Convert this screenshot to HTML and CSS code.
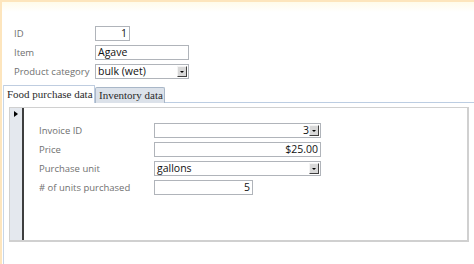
FILE: index.html
```html
<!DOCTYPE html>
<html>
<head>
<meta charset="utf-8">
<link rel="stylesheet" href="styles.css">
</head>
<body>
<div class="window">
  <div class="header">
    <div class="row">
      <span class="label">ID</span>
      <span class="box num w-id">1</span>
    </div>
    <div class="row">
      <span class="label">Item</span>
      <span class="box w-item">Agave</span>
    </div>
    <div class="row">
      <span class="label">Product category</span>
      <span class="box combo w-item"><span class="val">bulk (wet)</span><span class="drop"><span class="arrow"></span></span></span>
    </div>
  </div>
  <div class="tabsection">
    <div class="tabs">
      <div class="tab active">Food purchase data</div>
      <div class="tab">Inventory data</div>
      <div class="tabline"></div>
    </div>
    <div class="pane">
      <div class="panel">
        <div class="selector"><span class="tri"></span></div>
        <div class="form">
          <div class="frow">
            <span class="flabel">Invoice ID</span>
            <span class="box combo w-wide"><span class="val num">3</span><span class="drop"><span class="arrow"></span></span></span>
          </div>
          <div class="frow">
            <span class="flabel">Price</span>
            <span class="box num w-wide">$25.00</span>
          </div>
          <div class="frow">
            <span class="flabel">Purchase unit</span>
            <span class="box combo w-wide"><span class="val">gallons</span><span class="drop"><span class="arrow"></span></span></span>
          </div>
          <div class="frow">
            <span class="flabel"># of units purchased</span>
            <span class="box num w-units">5</span>
          </div>
        </div>
      </div>
    </div>
  </div>
</div>
</body>
</html>
```
FILE: styles.css
```css
html, body {
  margin: 0;
  padding: 0;
  background: #ffffff;
}
body {
  width: 474px;
  height: 264px;
  overflow: hidden;
  font-family: "Open Sans", "Noto Sans", sans-serif;
}
.window {
  height: 262px;
  border-top: 2px solid #fde5bd;
  border-left: 2px solid #fde5bd;
  background: linear-gradient(#fffbea 0, #ffffff 10px);
  display: flex;
  flex-direction: column;
}
.header {
  padding: 24px 0 0 12px;
  display: flex;
  flex-direction: column;
  gap: 4px;
}
.row {
  display: flex;
  align-items: center;
  height: 15px;
}
.label {
  width: 81px;
  font-size: 9.5px;
  color: #707070;
  line-height: 15px;
}
.box {
  box-sizing: border-box;
  height: 15px;
  border: 1px solid #b0b4ba;
  background: #fff;
  font-size: 10.5px;
  line-height: 13px;
  color: #111;
  padding: 0 2px;
  white-space: nowrap;
  overflow: hidden;
}
.num { text-align: right; }
.w-id { width: 35px; }
.w-item { width: 94px; }
.w-wide { width: 167px; }
.w-units { width: 99px; }
.combo {
  display: flex;
  padding-right: 1px;
}
.combo .val {
  flex: 1;
}
.drop {
  width: 10px;
  height: 11px;
  margin-top: 1px;
  box-sizing: border-box;
  border-top: 1px solid #f4f4f4;
  border-left: 1px solid #f4f4f4;
  border-right: 1px solid #404040;
  border-bottom: 1px solid #404040;
  background: #d8d8d8;
  display: flex;
  align-items: center;
  justify-content: center;
}
.arrow {
  width: 0;
  height: 0;
  border-left: 2px solid transparent;
  border-right: 2px solid transparent;
  border-top: 2px solid #000;
}
.tabsection {
  flex: 1;
  margin-top: 6px;
  margin-left: 1px;
  border-left: 1px solid #c7d6e8;
  display: flex;
  flex-direction: column;
}
.tabs {
  display: flex;
  align-items: flex-end;
  height: 18px;
}
.tab {
  box-sizing: border-box;
  font-family: "Liberation Serif", "DejaVu Serif", serif;
  font-size: 11px;
  color: #2a2a2a;
  white-space: nowrap;
  overflow: hidden;
}
.tab.active {
  height: 18px;
  line-height: 17px;
  padding: 0 2px 0 3px;
  background: #fff;
  border-top: 1px solid #bfcde0;
  border-right: 1px solid #bfcde0;
  width: 91px;
}
.tab:not(.active) {
  height: 16px;
  line-height: 15px;
  width: 70px;
  padding: 0 3px;
  background: #dce2ea;
  border: 1px solid #a9b7c8;
  border-bottom: none;
  border-radius: 2px 2px 0 0;
}
.tabline {
  flex: 1;
  height: 1px;
  background: #bccde2;
}
.pane {
  flex: 1;
  padding: 4px 5px 0 5px;
}
.panel {
  height: 135px;
  box-sizing: border-box;
  border: 1px solid #d0d0d0;
  border-right-width: 2px;
  border-bottom-width: 2px;
  display: flex;
}
.selector {
  width: 12px;
  background: #e4e8ee;
  border-right: 2px solid #3e3e3e;
  position: relative;
}
.tri {
  position: absolute;
  left: 4px;
  top: 3px;
  width: 0;
  height: 0;
  border-top: 3px solid transparent;
  border-bottom: 3px solid transparent;
  border-left: 4px solid #000;
}
.form {
  flex: 1;
  padding: 15px 0 0 15px;
  display: flex;
  flex-direction: column;
  gap: 4px;
}
.frow {
  display: flex;
  align-items: center;
  height: 15px;
}
.flabel {
  width: 115px;
  font-size: 9.5px;
  color: #707070;
  line-height: 15px;
}
```
